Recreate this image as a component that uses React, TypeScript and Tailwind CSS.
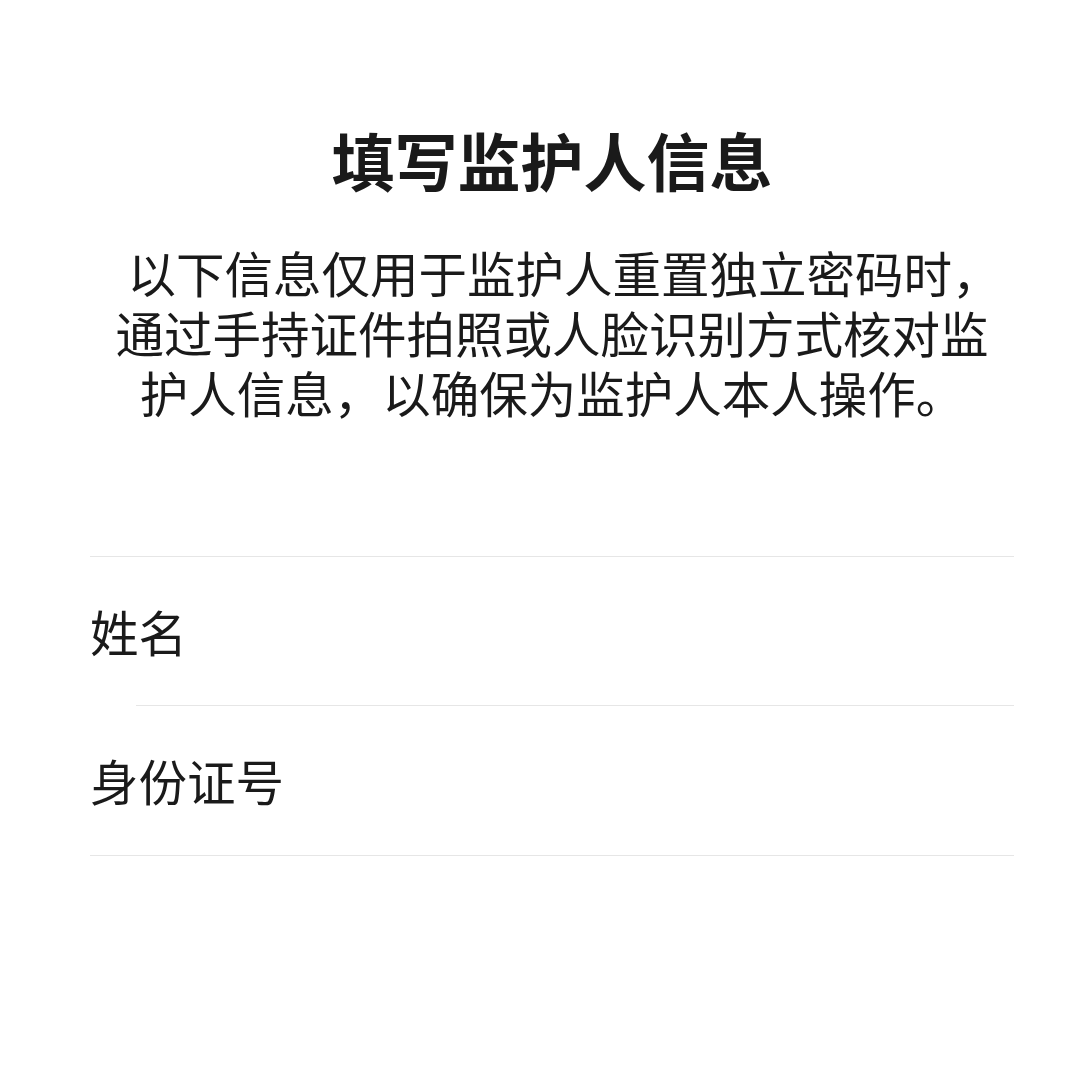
export default function App() {
  const font = { fontFamily: '"Noto Sans CJK SC", "Noto Sans", sans-serif' };
  return (
    <div className="w-[1080px] h-[1084px] bg-white text-[#1a1a1a] overflow-hidden" style={font}>
      <div className="pl-[90px] pr-[66px] pt-[119px]">
        <h1 className="text-center text-[63px] leading-[80px] font-bold">填写监护人信息</h1>
        <p className="mx-auto w-[902px] mt-[43px] text-center indent-[24px] text-[48.5px] leading-[60px]">
          以下信息仅用于监护人重置独立密码时，通过手持证件拍照或人脸识别方式核对监护人信息，以确保为监护人本人操作。
        </p>
        <div className="mt-[134px] border-t border-[#e6e6e6]">
          <div className="h-[148px] flex items-center text-[48.5px]">姓名</div>
          <div className="ml-[46px] border-t border-[#e6e6e6]" />
          <div className="h-[149px] flex items-center text-[48.5px]">身份证号</div>
          <div className="border-t border-[#e6e6e6]" />
        </div>
      </div>
    </div>
  );
}
